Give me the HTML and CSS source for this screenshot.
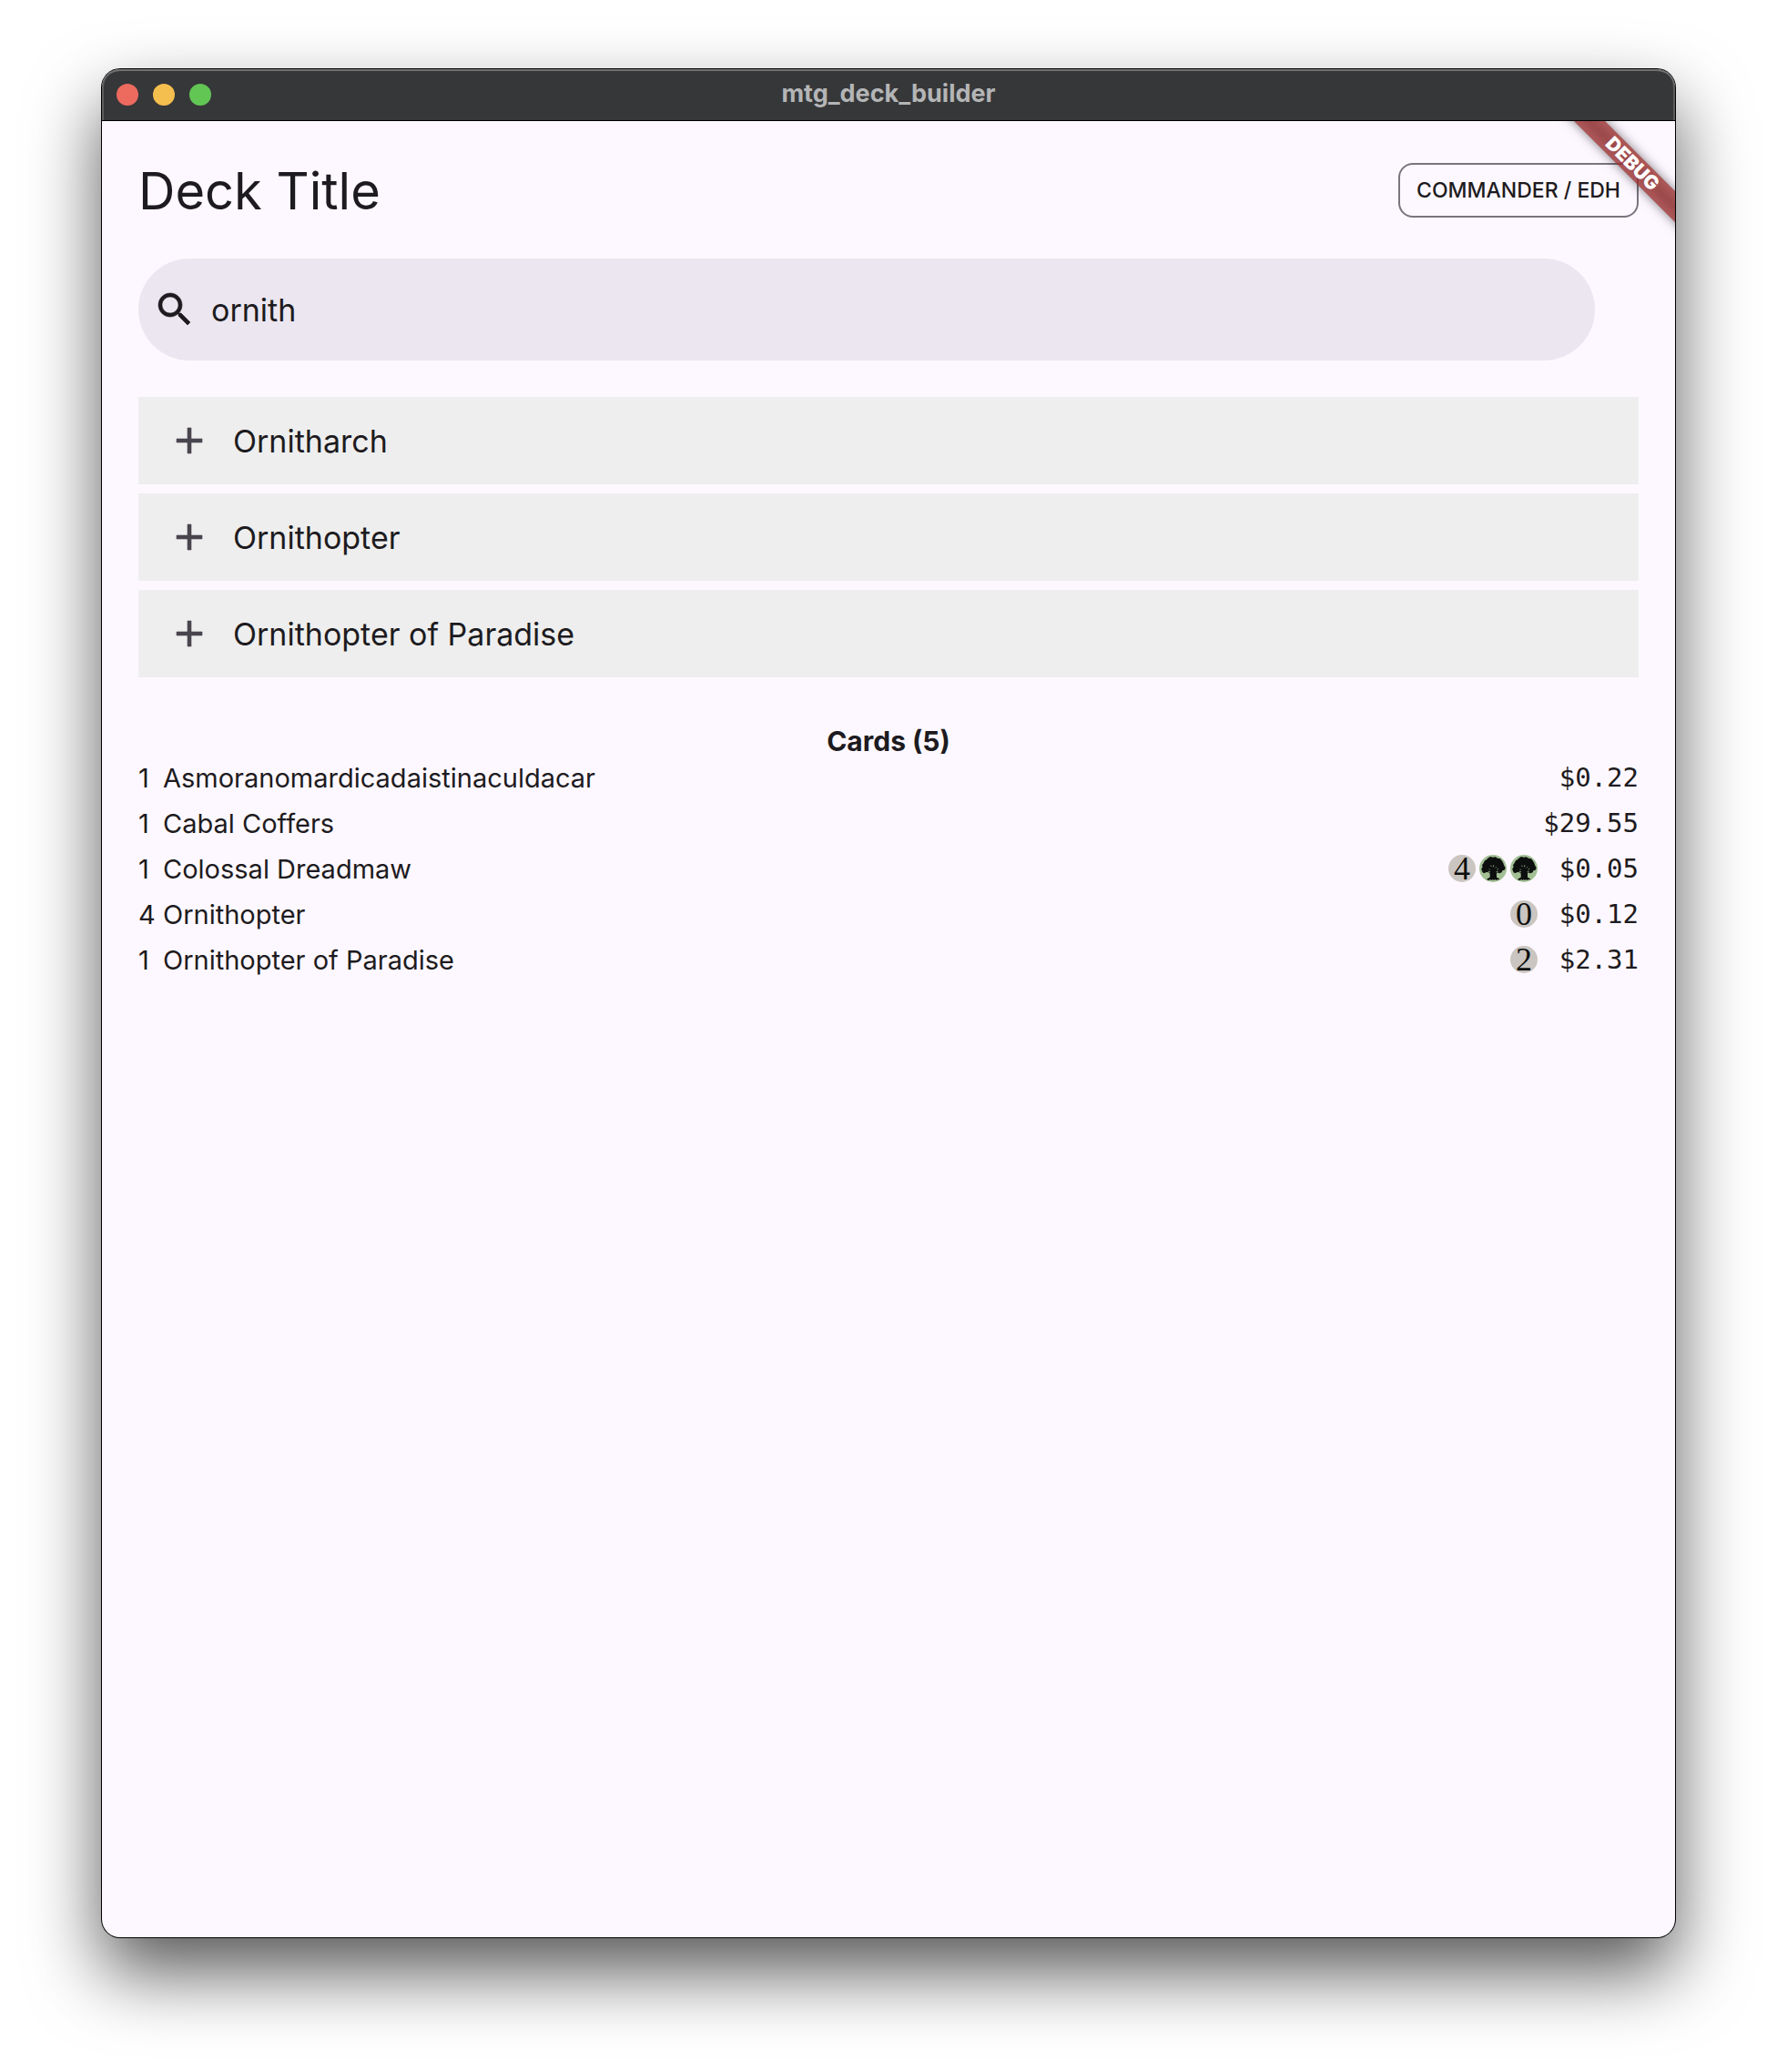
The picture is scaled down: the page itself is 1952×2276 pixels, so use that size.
FILE: index.html
```html
<!DOCTYPE html>
<html lang="en">
<head>
<meta charset="utf-8">
<title>mtg_deck_builder</title>
<link rel="stylesheet" href="styles.css">
</head>
<body>
<svg class="defs" aria-hidden="true">
  <symbol id="icon-add" viewBox="0 0 24 24"><path d="M19 13h-6v6h-2v-6H5v-2h6V5h2v6h6z"/></symbol>
  <symbol id="mana-green" viewBox="0 0 90 90">
    <circle cx="45" cy="45" r="45" fill="#a3c095"/>
    <path fill="#0d0f0f" d="M28 11L36 6 45 8 53 7 60 11 69 13 75 20 79 27 81 34 86 43 83 50 76 52 74 58 66 61 59 58 57 62 57 74 66 79 66 82 60 81 57 84 52 81 48 84 44 81 40 84 36 81 31 84 25 82 26 79 35 74 35 62 31 58 22 57 19 60 12 59 8 52 7 46 11 40 9 34 14 27 18 19 24 16z"/>
    <path fill="none" stroke="#a3c095" stroke-width="2.5" d="M32 47l3 2M38 35l2 4M47 34v6M54 43l2-3M59 48l4-2M29 54l7 3M56 56l6-2"/>
  </symbol>
</svg>
<div class="window">
  <header class="titlebar">
    <div class="lights">
      <button class="light close" aria-label="Close"></button>
      <button class="light minimize" aria-label="Minimize"></button>
      <button class="light maximize" aria-label="Zoom"></button>
    </div>
    <div class="window-title">mtg_deck_builder</div>
  </header>
  <main class="content">
    <div class="deck-header">
      <h1 class="deck-title">Deck Title</h1>
      <button class="format">COMMANDER / EDH</button>
    </div>
    <label class="search">
      <svg class="icon search-icon" viewBox="0 0 24 24" aria-hidden="true"><path d="M15.5 14h-.79l-.28-.27C15.41 12.59 16 11.11 16 9.5 16 5.91 13.09 3 9.5 3S3 5.91 3 9.5 5.91 16 9.5 16c1.61 0 3.09-.59 4.23-1.57l.27.28v.79l5 4.99L20.49 19l-4.99-5zm-6 0C7.01 14 5 11.99 5 9.5S7.01 5 9.5 5 14 7.01 14 9.5 11.99 14 9.5 14z"/></svg>
      <input class="search-input" type="text" value="ornith" aria-label="Search cards">
    </label>
    <ul class="results">
      <li><button class="result"><svg class="icon" aria-hidden="true"><use href="#icon-add"/></svg><span>Ornitharch</span></button></li>
      <li><button class="result"><svg class="icon" aria-hidden="true"><use href="#icon-add"/></svg><span>Ornithopter</span></button></li>
      <li><button class="result"><svg class="icon" aria-hidden="true"><use href="#icon-add"/></svg><span>Ornithopter of Paradise</span></button></li>
    </ul>
    <table class="cards">
      <caption>Cards (5)</caption>
      <tbody>
        <tr><td class="qty">1</td><td class="name">Asmoranomardicadaistinaculdacar</td><td class="cost"></td><td class="price">$0.22</td></tr>
        <tr><td class="qty">1</td><td class="name">Cabal Coffers</td><td class="cost"></td><td class="price">$29.55</td></tr>
        <tr><td class="qty">1</td><td class="name">Colossal Dreadmaw</td><td class="cost"><div class="mana"><span class="pip">4</span><svg class="forest"><use href="#mana-green"/></svg><svg class="forest"><use href="#mana-green"/></svg></div></td><td class="price">$0.05</td></tr>
        <tr><td class="qty">4</td><td class="name">Ornithopter</td><td class="cost"><div class="mana"><span class="pip">0</span></div></td><td class="price">$0.12</td></tr>
        <tr><td class="qty">1</td><td class="name">Ornithopter of Paradise</td><td class="cost"><div class="mana"><span class="pip">2</span></div></td><td class="price">$2.31</td></tr>
      </tbody>
    </table>
    <div class="banner-corner"><div class="banner">DEBUG</div></div>
  </main>
</div>
</body>
</html>
```

FILE: styles.css
```css
* { box-sizing: border-box; }

body {
  display: flex;
  flex-direction: column;
  min-height: 100vh;
  margin: 0;
  padding: 76px 112px 148px;
  background: #fff;
  color: #1d1b20;
  font-family: Inter, "Liberation Sans", sans-serif;
  font-size: 29px;
}

button, input { font: inherit; color: inherit; }

.defs { position: absolute; width: 0; height: 0; }

.window {
  flex: 1;
  display: flex;
  flex-direction: column;
  border-radius: 20px;
  background: #fdf8ff;
  box-shadow: 0 0 0 1px #000, 0 38px 80px rgba(0, 0, 0, .66);
}

.titlebar {
  display: grid;
  grid-template-columns: 1fr auto 1fr;
  align-items: center;
  height: 57px;
  padding: 0 16px;
  border-bottom: 1px solid #000;
  border-radius: 20px 20px 0 0;
  background: #363739;
  box-shadow: inset 0 2px 0 #707273, inset 2px 0 0 #5c5d5f, inset -2px 0 0 #5c5d5f;
}

.lights { display: flex; gap: 16px; }

.light {
  width: 24px;
  height: 24px;
  padding: 0;
  border: 0;
  border-radius: 50%;
}
.close { background: #ed6a5f; }
.minimize { background: #f5bf4f; }
.maximize { background: #62c655; }

.window-title {
  padding-bottom: 3px;
  color: #b4b5b6;
  font-size: 27px;
  font-weight: 700;
}

.content {
  position: relative;
  flex: 1;
  padding: 40px;
}

.deck-header {
  display: flex;
  justify-content: space-between;
  align-items: center;
  height: 71px;
  margin-bottom: 40px;
}

.deck-title {
  margin: 0;
  padding-top: 2px;
  font-size: 56px;
  font-weight: 400;
}

.format {
  height: 60px;
  padding: 0 18px;
  border: 2px solid #79747e;
  border-radius: 16px;
  background: transparent;
  font-size: 23px;
  font-weight: 500;
}

.icon {
  flex: none;
  width: 48px;
  height: 48px;
  fill: #49454f;
  stroke: #49454f;
  stroke-width: .3;
}
.search-icon { fill: #1d1b20; stroke: #1d1b20; }

.search {
  display: flex;
  align-items: center;
  gap: 16px;
  height: 112px;
  margin: 0 48px 40px 0;
  padding: 0 16px;
  border-radius: 56px;
  background: #ece6f0;
}

.search-input {
  flex: 1;
  min-width: 0;
  padding: 0;
  border: 0;
  outline: 0;
  background: transparent;
  font-size: 34px;
}

.results {
  display: flex;
  flex-direction: column;
  gap: 10px;
  margin: 0 0 48px;
  padding: 0;
  list-style: none;
}

.result {
  display: flex;
  align-items: center;
  gap: 24px;
  width: 100%;
  height: 96px;
  padding: 0 32px;
  border: 0;
  background: #eee;
  font-size: 34px;
  text-align: left;
}

.cards {
  width: 100%;
  border-collapse: collapse;
}
.cards caption {
  height: 37px;
  font-size: 30px;
  font-weight: 700;
  line-height: 44px;
}
.cards td {
  height: 50px;
  padding: 0;
}
.cards .qty { width: 27px; }
.cards .cost { padding-right: 6px; }
.cards .price {
  width: 105px;
  font-family: "DejaVu Sans Mono", monospace;
  text-align: right;
}

.mana {
  display: flex;
  justify-content: flex-end;
  gap: 4px;
}

.forest {
  width: 30px;
  height: 30px;
}

.pip {
  width: 30px;
  height: 30px;
  border-radius: 50%;
  background: #cac5c0;
  color: #0d0f0f;
  font-family: "Liberation Serif", serif;
  font-size: 36px;
  line-height: 30px;
  text-align: center;
}

.banner-corner {
  position: absolute;
  top: 0;
  right: 0;
  width: 160px;
  height: 160px;
  overflow: hidden;
  pointer-events: none;
}

.banner {
  position: absolute;
  top: 35px;
  right: -53px;
  width: 200px;
  height: 24px;
  background: linear-gradient(rgba(154, 47, 47, .8), rgba(131, 30, 30, .8), rgba(154, 47, 47, .8));
  box-shadow: 0 0 12px rgba(0, 0, 0, .5);
  color: #fff;
  font-size: 21px;
  font-weight: 900;
  line-height: 24px;
  text-align: center;
  transform: rotate(45deg);
}
```
